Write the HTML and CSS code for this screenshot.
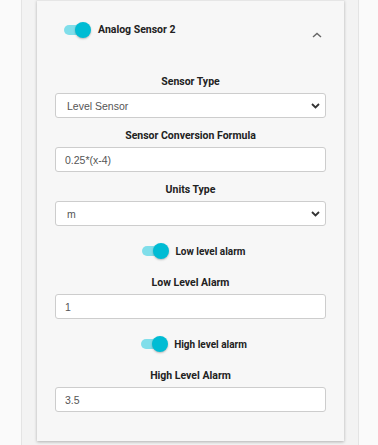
FILE: index.html
```
<!DOCTYPE html>
<html lang="en">
<head>
    <meta charset="UTF-8">
    <meta name="viewport" content="width=device-width, initial-scale=1.0">
    <title>Analog Sensor 2</title>
    <link rel="stylesheet" href="styles.css">
</head>
<body>
    <div class="page">
        <div class="card">
            <div class="card-header">
                <label class="switch">
                    <input type="checkbox" checked>
                    <span class="slider"></span>
                </label>
                <span class="card-title">Analog Sensor 2</span>
                <svg class="collapse" width="10" height="6" viewBox="0 0 10 6">
                    <path d="M1 5 L5 1.5 L9 5" fill="none" stroke="#666" stroke-width="1.4"/>
                </svg>
            </div>

            <div class="card-body">
                <div class="field">
                    <div class="field-label">Sensor Type</div>
                    <div class="select-wrap">
                        <select class="form-control">
                            <option>Level Sensor</option>
                        </select>
                        <svg class="caret" width="9" height="6" viewBox="0 0 9 6">
                            <path d="M1 1 L4.5 4.5 L8 1" fill="none" stroke="#333" stroke-width="1.8"/>
                        </svg>
                    </div>
                </div>

                <div class="field">
                    <div class="field-label">Sensor Conversion Formula</div>
                    <input class="form-control" type="text" value="0.25*(x-4)">
                </div>

                <div class="field">
                    <div class="field-label">Units Type</div>
                    <div class="select-wrap">
                        <select class="form-control">
                            <option>m</option>
                        </select>
                        <svg class="caret" width="9" height="6" viewBox="0 0 9 6">
                            <path d="M1 1 L4.5 4.5 L8 1" fill="none" stroke="#333" stroke-width="1.8"/>
                        </svg>
                    </div>
                </div>

                <div class="toggle-row">
                    <label class="switch">
                        <input type="checkbox" checked>
                        <span class="slider"></span>
                    </label>
                    <span class="toggle-text">Low level alarm</span>
                </div>

                <div class="field">
                    <div class="field-label">Low Level Alarm</div>
                    <input class="form-control" type="text" value="1">
                </div>

                <div class="toggle-row">
                    <label class="switch">
                        <input type="checkbox" checked>
                        <span class="slider"></span>
                    </label>
                    <span class="toggle-text">High level alarm</span>
                </div>

                <div class="field">
                    <div class="field-label">High Level Alarm</div>
                    <input class="form-control" type="text" value="3.5">
                </div>
            </div>
        </div>
    </div>
</body>
</html>
```

FILE: styles.css
```
body {
    margin: 0;
    background: #fafafa;
    font-family: Roboto, "Liberation Sans", Arial, sans-serif;
    color: #222;
}
.page {
    margin-left: 21px;
    width: 336px;
    min-height: 445px;
    padding: 0 14px 0 15px;
    box-sizing: border-box;
    width: 338px;
    border-left: 1px solid #e4e4e4;
    border-right: 1px solid #e4e4e4;
    background: #f3f3f3;
}
.card {
    width: 307px;
    background: #f7f7f7;
    border-top: 1px solid #e6e6e6;
    box-shadow: 0 1px 3px rgba(0,0,0,0.28);
}
.card-header {
    display: flex;
    align-items: flex-start;
    padding: 19px 22px 0 27px;
    height: 20px;
}
.card-title {
    margin-left: 7px;
    font-size: 10.5px;
    font-weight: 700;
    line-height: 20px;
    color: #222;
}
.collapse {
    margin-left: auto;
    margin-top: 12px;
}
.card-body {
    display: flex;
    flex-direction: column;
    padding: 34px 18px 29px;
}
.field {
    display: flex;
    flex-direction: column;
    margin-bottom: 10px;
}
.field:last-child {
    margin-bottom: 0;
}
.field-label {
    text-align: center;
    font-size: 10.5px;
    font-weight: 700;
    line-height: 16px;
    margin-bottom: 3px;
    color: #222;
}
.form-control {
    display: block;
    width: 100%;
    height: 25px;
    box-sizing: border-box;
    margin: 0;
    padding: 0 9px;
    border: 1px solid #cdcdcd;
    border-radius: 3px;
    background: #fff;
    font-family: "Liberation Sans", Arial, sans-serif;
    font-size: 10.5px;
    color: #555;
    outline: none;
}
select.form-control {
    appearance: none;
    -webkit-appearance: none;
    padding-left: 11px;
}
.select-wrap {
    position: relative;
}
.caret {
    position: absolute;
    right: 6px;
    top: 10px;
    pointer-events: none;
}
.toggle-row {
    display: flex;
    align-items: center;
    justify-content: center;
    height: 20px;
    margin: 5px 0 14px;
    padding-left: 7px;
}
.toggle-text {
    margin-left: 6px;
    font-size: 10px;
    font-weight: 700;
    color: #222;
}
.switch {
    position: relative;
    display: inline-block;
    width: 27px;
    height: 16px;
    flex-shrink: 0;
}
.card-header .switch {
    margin-top: 2px;
}
.switch input {
    display: none;
}
.slider::before {
    content: "";
    position: absolute;
    left: 0;
    top: 3px;
    width: 24px;
    height: 10px;
    border-radius: 5px;
    background: #80deea;
}
.slider::after {
    content: "";
    position: absolute;
    right: 0;
    top: 0;
    width: 16px;
    height: 16px;
    border-radius: 50%;
    background: #00bcd4;
    box-shadow: 0 1px 2px rgba(0,0,0,0.25);
}
```
